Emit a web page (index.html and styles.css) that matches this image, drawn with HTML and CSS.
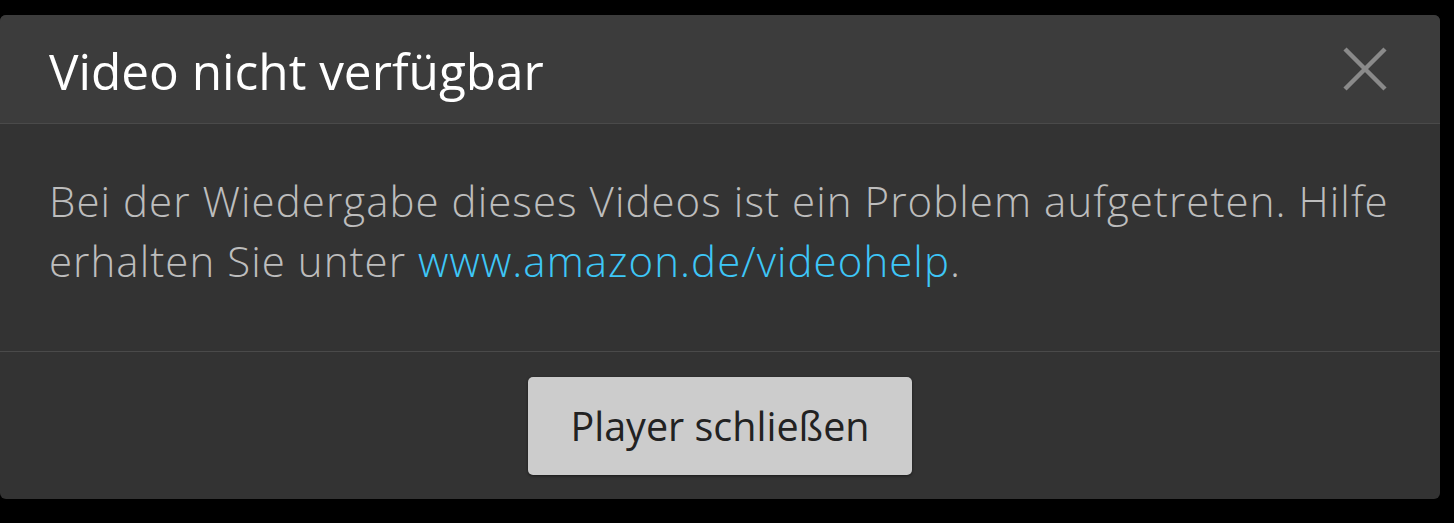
FILE: index.html
```html
<!DOCTYPE html>
<html lang="de">
<head>
    <meta charset="UTF-8">
    <title>Video nicht verfügbar</title>
    <link rel="stylesheet" href="styles.css">
</head>
<body>
    <div class="dialog">
        <div class="dialog-header">
            <h1>Video nicht verfügbar</h1>
            <button class="close" aria-label="Schließen">
                <svg width="44" height="44" viewBox="0 0 44 44">
                    <path d="M2 2 L42 42 M42 2 L2 42" stroke="#8a8a8a" stroke-width="4.5" fill="none"/>
                </svg>
            </button>
        </div>
        <div class="dialog-body">
            <p>Bei der Wiedergabe dieses Videos ist ein Problem aufgetreten. Hilfe erhalten Sie unter <a href="#">www.amazon.de/videohelp</a>.</p>
        </div>
        <div class="dialog-footer">
            <button class="primary">Player schließen</button>
        </div>
    </div>
</body>
</html>
```

FILE: styles.css
```css
body {
    margin: 0;
    padding-top: 15px;
    background: #000;
    font-family: "Open Sans", "Noto Sans", sans-serif;
    height: 523px;
    box-sizing: border-box;
}
.dialog {
    width: 1440px;
    height: 484px;
    background: #333;
    border-radius: 6px;
    overflow: hidden;
    display: flex;
    flex-direction: column;
}
.dialog-header {
    height: 108px;
    background: #3c3c3c;
    border-bottom: 1px solid #4a4a4a;
    display: flex;
    align-items: center;
    justify-content: space-between;
    padding: 0 53px 0 49px;
}
.dialog-header h1 {
    margin: 0;
    padding-top: 4px;
    font-size: 49.5px;
    font-weight: 400;
    color: #fff;
}
.close {
    background: none;
    border: none;
    padding: 0;
    width: 44px;
    height: 44px;
    cursor: pointer;
}
.dialog-body {
    height: 228px;
    box-sizing: border-box;
    border-bottom: 1px solid #4a4a4a;
    padding: 47px 49px 0 49px;
}
.dialog-body p {
    margin: 0;
    font-size: 42px;
    font-weight: 300;
    line-height: 60px;
    letter-spacing: 1.05px;
    color: #bdbdbd;
}
.dialog-body a {
    color: #3ec6f7;
    text-decoration: none;
}
.dialog-footer {
    flex: 1;
    display: flex;
    justify-content: center;
    padding-top: 25px;
}
.primary {
    width: 384px;
    height: 98px;
    background: #cccccc;
    border: none;
    border-radius: 5px;
    box-shadow: 0 1px 3px rgba(0,0,0,0.5);
    font-family: inherit;
    font-size: 39.5px;
    color: #222;
    cursor: pointer;
}
```
